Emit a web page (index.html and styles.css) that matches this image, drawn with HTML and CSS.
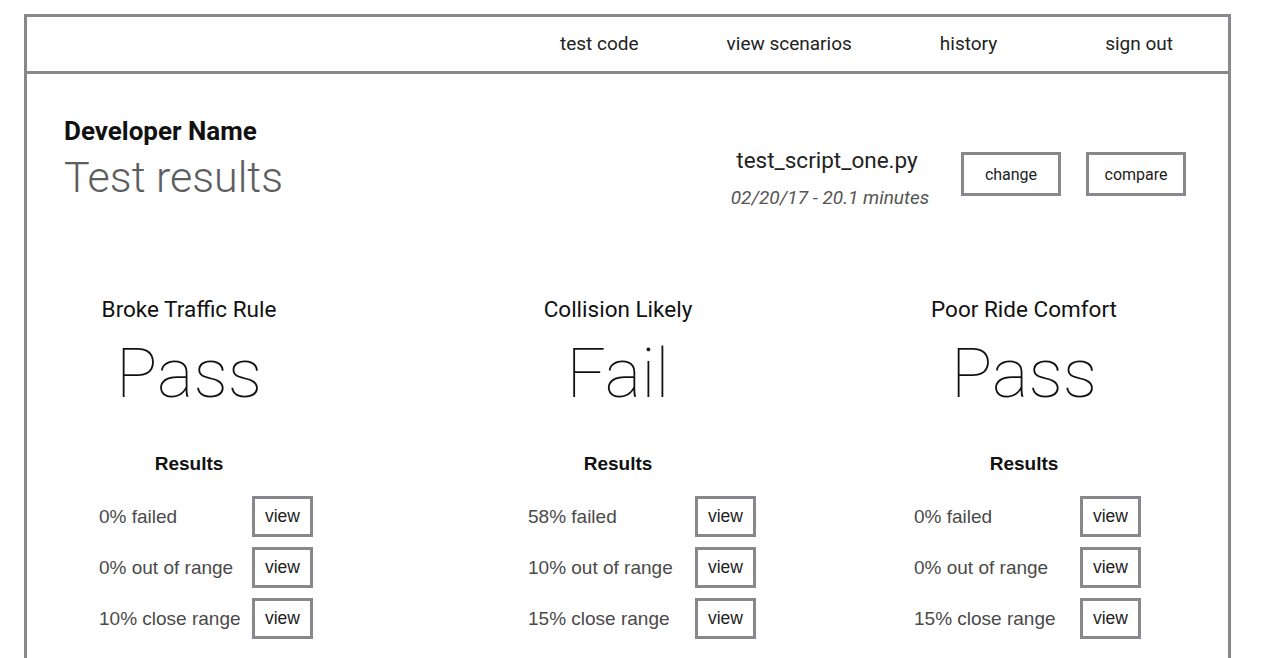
FILE: index.html
```html
<!DOCTYPE html>
<html>
<head>
<meta charset="utf-8">
<title>Test results</title>
<link rel="stylesheet" href="styles.css">
</head>
<body>
<div class="frame">
  <header class="nav">
    <a class="nav-item">test code</a>
    <a class="nav-item">view scenarios</a>
    <a class="nav-item">history</a>
    <a class="nav-item nav-last">sign out</a>
  </header>
  <section class="top">
    <div class="title-block">
      <div class="dev-name">Developer Name</div>
      <h1 class="page-title">Test results</h1>
    </div>
    <div class="script-group">
      <div class="script-info">
        <div class="script-name">test_script_one.py</div>
        <div class="script-meta">02/20/17 - 20.1 minutes</div>
      </div>
      <button class="box-btn">change</button>
      <button class="box-btn">compare</button>
    </div>
  </section>
  <section class="columns">
    <div class="col col-1">
      <div class="col-title">Broke Traffic Rule</div>
      <div class="verdict">Pass</div>
      <div class="results-head">Results</div>
      <div class="rows">
        <div class="row"><span class="label">0% failed</span><button class="view-btn">view</button></div>
        <div class="row"><span class="label">0% out of range</span><button class="view-btn">view</button></div>
        <div class="row"><span class="label">10% close range</span><button class="view-btn">view</button></div>
      </div>
    </div>
    <div class="col col-2">
      <div class="col-title">Collision Likely</div>
      <div class="verdict">Fail</div>
      <div class="results-head">Results</div>
      <div class="rows">
        <div class="row"><span class="label">58% failed</span><button class="view-btn">view</button></div>
        <div class="row"><span class="label">10% out of range</span><button class="view-btn">view</button></div>
        <div class="row"><span class="label">15% close range</span><button class="view-btn">view</button></div>
      </div>
    </div>
    <div class="col col-3">
      <div class="col-title">Poor Ride Comfort</div>
      <div class="verdict">Pass</div>
      <div class="results-head">Results</div>
      <div class="rows">
        <div class="row"><span class="label">0% failed</span><button class="view-btn">view</button></div>
        <div class="row"><span class="label">0% out of range</span><button class="view-btn">view</button></div>
        <div class="row"><span class="label">15% close range</span><button class="view-btn">view</button></div>
      </div>
    </div>
  </section>
</div>
</body>
</html>
```

FILE: styles.css
```css
* { box-sizing: border-box; }

html, body {
  margin: 0;
  padding: 0;
  background: #ffffff;
  overflow: hidden;
}

body {
  font-family: Roboto, "Liberation Sans", sans-serif;
  color: #222;
}

.frame {
  margin: 14px 0 0 24px;
  width: 1207px;
  height: 644px;
  border: 3px solid #88888c;
  border-bottom: 0;
  overflow: hidden;
}

.nav {
  height: 57px;
  border-bottom: 3px solid #88888c;
  display: flex;
  align-items: center;
  justify-content: flex-end;
  gap: 88px;
  padding-right: 55px;
}

.nav-item {
  font-size: 19px;
  color: #222;
  line-height: 24px;
}

.nav-last { margin-left: 20px; }

.top {
  display: flex;
  justify-content: space-between;
  align-items: flex-start;
  padding: 42px 42px 0 37px;
}

.dev-name {
  font-size: 26px;
  font-weight: 700;
  line-height: 30px;
  color: #111;
}

.page-title {
  margin: 6px 0 0;
  font-size: 43px;
  font-weight: 300;
  line-height: 50px;
  color: #5e5e5e;
}

.script-group {
  display: flex;
  align-items: flex-start;
  margin-top: 32px;
}

.script-info {
  text-align: center;
  width: 204px;
  margin-right: 29px;
}

.script-name {
  font-size: 22.5px;
  line-height: 24px;
  color: #222;
  margin-right: 6px;
}

.script-meta {
  margin-top: 15px;
  font-size: 19px;
  line-height: 22px;
  font-style: italic;
  color: #555;
}

.box-btn {
  margin-top: 4px;
  width: 100px;
  height: 44px;
  border: 3px solid #88888c;
  background: #fff;
  font-family: Roboto, sans-serif;
  font-size: 16px;
  color: #222;
  padding: 0;
}

.box-btn + .box-btn { margin-left: 25px; }

.columns {
  display: flex;
  margin-top: 87px;
  padding-left: 32px;
}

.col {
  width: 260px;
  display: flex;
  flex-direction: column;
  align-items: center;
}

.col-2 { margin-left: 169px; }
.col-3 { margin-left: 146px; }

.col-title {
  font-size: 22.5px;
  line-height: 26px;
  color: #111;
}

.verdict {
  margin-top: 14px;
  font-size: 69px;
  font-weight: 100;
  line-height: 76px;
  color: #111;
}

.results-head {
  margin-top: 41px;
  font-family: "Liberation Sans", Arial, sans-serif;
  font-weight: 700;
  font-size: 19px;
  line-height: 22px;
  color: #111;
}

.rows {
  align-self: stretch;
  margin-top: 21px;
  display: flex;
  flex-direction: column;
  gap: 10px;
  padding-left: 40px;
}

.col-3 .rows { padding-left: 20px; }

.row {
  display: flex;
  align-items: center;
  height: 41px;
}

.label {
  flex: 0 0 153px;
  font-family: "Liberation Sans", Arial, sans-serif;
  font-size: 19px;
  color: #4a4a4a;
  white-space: nowrap;
}

.col-2 .label { flex-basis: 167px; }
.col-3 .label { flex-basis: 166px; }

.view-btn {
  flex: 0 0 61px;
  height: 41px;
  border: 3px solid #88888c;
  background: #fff;
  font-family: "Liberation Sans", Arial, sans-serif;
  font-size: 17.5px;
  color: #222;
  padding: 0;
}
```
